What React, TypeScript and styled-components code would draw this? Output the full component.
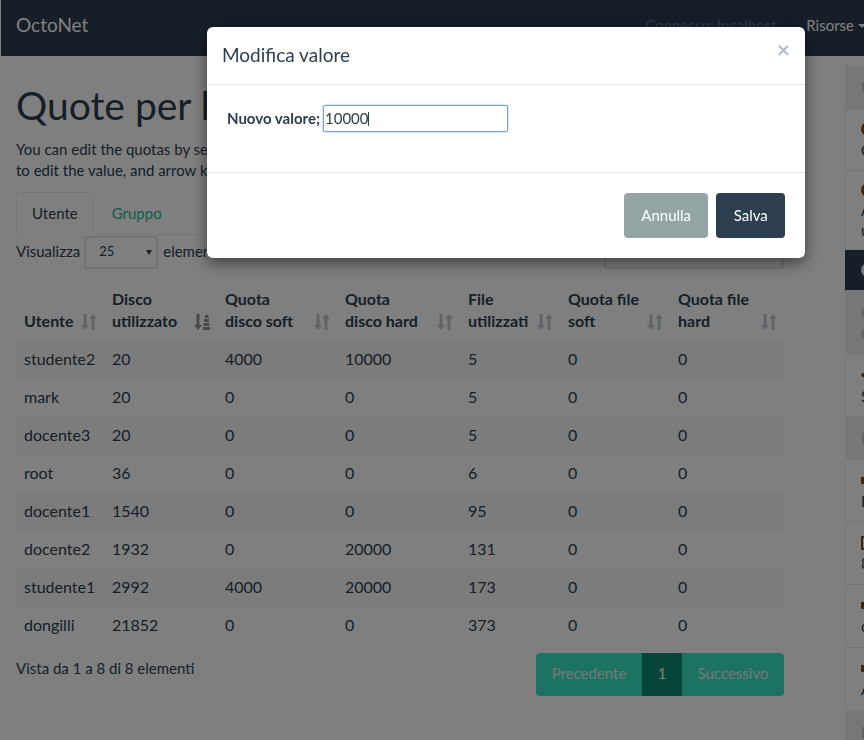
import React from 'react'
import styled, { createGlobalStyle } from 'styled-components'

const GlobalStyle = createGlobalStyle`
  html, body {
    margin: 0;
    height: 740px;
    overflow: hidden;
    background: #fff;
  }
  body {
    font-family: Lato, "Liberation Sans", sans-serif;
    font-size: 15px;
    line-height: 21.4px;
    color: #2c3e50;
  }
  * { box-sizing: border-box; }
`

const Page = styled.div`
  width: 900px;
  height: 740px;
  margin-left: 1px;
  overflow: hidden;
`

const Navbar = styled.nav`
  height: 56px;
  background: #2c3e50;
  display: flex;
  align-items: center;
  padding: 0 35px 6px 15px;
`

const Brand = styled.div`
  font-size: 19px;
  color: #fff;
`

const NavRight = styled.div`
  margin-left: auto;
  display: flex;
  align-items: center;
  gap: 30px;
  padding-top: 1px;
`

const NavText = styled.span`
  color: #5f7387;
`

const NavLink = styled.span`
  color: #fff;
  display: flex;
  align-items: center;
  gap: 4px;
  &::after {
    content: "";
    border-top: 4px solid #fff;
    border-left: 4px solid transparent;
    border-right: 4px solid transparent;
  }
`

const Layout = styled.div`
  display: grid;
  grid-template-columns: 768px 1fr;
  column-gap: 61px;
  padding-left: 15px;
`

const Content = styled.main`
  padding-top: 28px;
`

const Title = styled.h1`
  margin: 0;
  font-size: 39px;
  font-weight: 400;
  line-height: 43px;
  white-space: nowrap;
`

const Intro = styled.p`
  margin: 12px 0 10px;
`

const Tabs = styled.ul`
  list-style: none;
  display: flex;
  margin: 0;
  padding: 0;
  height: 43px;
  border-bottom: 1px solid #ecf0f1;
`

const Tab = styled.li<{ $active?: boolean }>`
  height: 43px;
  padding: 10px 15px;
  margin-right: 2px;
  border: 1px solid ${p => (p.$active ? '#ecf0f1' : 'transparent')};
  border-bottom-color: ${p => (p.$active ? '#fff' : 'transparent')};
  border-radius: 4px 4px 0 0;
  color: ${p => (p.$active ? '#2c3e50' : '#18bc9c')};
  background: ${p => (p.$active ? '#fff' : 'transparent')};
`

const Toolbar = styled.div`
  display: flex;
  justify-content: space-between;
  margin-top: 1px;
  height: 33px;
`

const LengthLabel = styled.label`
  display: flex;
  align-items: flex-start;
  gap: 5px;
  line-height: 31px;
`

const SelectWrap = styled.span`
  position: relative;
  display: block;
  margin-left: -1px;
  &::after {
    content: "";
    position: absolute;
    right: 6px;
    top: 14px;
    border-top: 5px solid #2c3e50;
    border-left: 3px solid transparent;
    border-right: 3px solid transparent;
  }
`

const LengthSelect = styled.select`
  display: block;
  appearance: none;
  width: 74px;
  height: 33px;
  padding: 0 0 2px 13px;
  border: 2px solid #dce4ec;
  border-radius: 3px;
  background: #fff;
  color: #2c3e50;
  font-family: inherit;
  font-size: 13px;
`

const SearchInput = styled.input`
  width: 180px;
  height: 33px;
  border: 2px solid #dce4ec;
  border-radius: 3px;
`

const Table = styled.table`
  width: 768px;
  margin-top: 12px;
  border-collapse: collapse;
  table-layout: fixed;
  font-size: 16px;
`

const HeadCell = styled.th<{ $w: number }>`
  position: relative;
  width: ${p => p.$w}px;
  padding: 7px 8px 9px;
  height: 60px;
  text-align: left;
  vertical-align: bottom;
  font-weight: 700;
  line-height: 22px;
`

const Row = styled.tr<{ $striped: boolean }>`
  background: ${p => (p.$striped ? '#f9f9f9' : 'transparent')};
`

const Cell = styled.td`
  height: 38px;
  padding: 0 8px 2px;
`

const SortMark = styled.svg<{ $active?: boolean }>`
  position: absolute;
  right: 7px;
  bottom: 11px;
  width: 16px;
  height: 16px;
  fill: #2c3e50;
  opacity: ${p => (p.$active ? 0.55 : 0.28)};
`

const TableFooter = styled.div`
  display: flex;
  justify-content: space-between;
  align-items: flex-start;
  margin-top: 8px;
`

const Info = styled.div`
  padding-top: 5px;
`

const Pager = styled.div`
  display: flex;
  height: 43px;
  border-radius: 4px;
  overflow: hidden;
`

const PageItem = styled.span<{ $current?: boolean; $w: number }>`
  width: ${p => p.$w}px;
  padding-top: 10px;
  text-align: center;
  background: ${p => (p.$current ? '#0f8974' : '#3be6c4')};
  color: ${p => (p.$current ? '#fff' : '#ecf0f1')};
`

const Side = styled.aside`
  margin-top: 10px;
  width: 100px;
`

const SideRow = styled.div<{ $h: number; $tone?: 'head' | 'dark' | 'soft' }>`
  height: ${p => p.$h}px;
  padding-left: 15px;
  display: flex;
  flex-direction: column;
  justify-content: center;
  white-space: nowrap;
  line-height: 20.5px;
  border-bottom: 1px solid #ecf0f1;
  border-left: 1px solid ${p => (p.$tone === 'dark' ? '#2c3e50' : '#ecf0f1')};
  background: ${p =>
    p.$tone === 'dark' ? '#2c3e50' : p.$tone === 'head' || p.$tone === 'soft' ? '#ecf0f1' : '#fff'};
  color: ${p => (p.$tone === 'head' ? '#b4bcc2' : p.$tone === 'soft' ? '#b4bcc2' : '#2c3e50')};
`

type GlyphKind = 'round' | 'bar' | 'dot' | 'light' | 'tall'

const glyphHeight: Record<GlyphKind, number> = { round: 14, light: 14, tall: 14, bar: 7, dot: 6 }

const SideGlyph = styled.span<{ $kind: GlyphKind }>`
  display: block;
  width: 14px;
  height: ${p => glyphHeight[p.$kind]}px;
  margin: ${p => (20.5 - glyphHeight[p.$kind]) / 2}px 0;
  border-radius: ${p => (p.$kind === 'bar' || p.$kind === 'tall' ? '1px' : '50%')};
  background: ${p => (p.$kind === 'light' ? '#dfeeff' : p.$kind === 'tall' ? 'transparent' : '#7a4a20')};
  border: ${p => (p.$kind === 'tall' ? '2px solid #7a4a20' : '0')};
`

const Backdrop = styled.div`
  position: fixed;
  inset: 0;
  background: rgba(0, 0, 0, 0.5);
`

const Dialog = styled.div`
  position: fixed;
  left: 207px;
  top: 27px;
  width: 598px;
  height: 231px;
  background: #fff;
  border-radius: 6px;
  box-shadow: 0 5px 15px rgba(0, 0, 0, 0.5);
`

const DialogHead = styled.div`
  display: flex;
  justify-content: space-between;
  align-items: flex-start;
  height: 58px;
  padding: 14px 15px;
  border-bottom: 1px solid #e5e5e5;
`

const DialogTitle = styled.h4`
  margin: 0;
  font-size: 19px;
  font-weight: 400;
  line-height: 27px;
`

const Close = styled.span`
  font-size: 23px;
  font-weight: 700;
  line-height: 16px;
  color: #b4bcc8;
`

const DialogBody = styled.div`
  height: 88px;
  padding: 20px;
  display: flex;
  align-items: flex-start;
  gap: 3px;
  border-bottom: 1px solid #e5e5e5;
`

const FieldLabel = styled.label`
  font-weight: 700;
  line-height: 26px;
`

const FieldWrap = styled.div`
  position: relative;
`

const FieldInput = styled.input`
  display: block;
  width: 185px;
  height: 27px;
  padding: 0 2px 1px 1px;
  border: 1px solid #7f9fcb;
  border-radius: 2px;
  box-shadow: 0 0 2px #7fa8e0;
  outline: none;
  font-family: inherit;
  font-size: 15px;
  color: #2c3e50;
`

const Caret = styled.span`
  position: absolute;
  left: 45px;
  top: 7px;
  width: 1px;
  height: 14px;
  background: #2c3e50;
`

const DialogFoot = styled.div`
  display: flex;
  justify-content: flex-end;
  gap: 8px;
  padding: 20px;
`

const Button = styled.button<{ $primary?: boolean }>`
  height: 45px;
  padding: 0 17.3px 2px;
  border: 0;
  border-radius: 4px;
  background: ${p => (p.$primary ? '#2c3e50' : '#95a5a6')};
  color: #fff;
  font-family: inherit;
  font-size: 15px;
`

const columns: [React.ReactNode, number][] = [
  ['Utente', 88],
  [<>Disco<br />utilizzato</>, 113],
  [<>Quota<br />disco soft</>, 120],
  [<>Quota<br />disco hard</>, 123],
  [<>File<br />utilizzati</>, 100],
  [<>Quota file<br />soft</>, 110],
  [<>Quota file<br />hard</>, 114],
]

const rows = [
  ['studente2', 20, 4000, 10000, 5, 0, 0],
  ['mark', 20, 0, 0, 5, 0, 0],
  ['docente3', 20, 0, 0, 5, 0, 0],
  ['root', 36, 0, 0, 6, 0, 0],
  ['docente1', 1540, 0, 0, 95, 0, 0],
  ['docente2', 1932, 0, 20000, 131, 0, 0],
  ['studente1', 2992, 4000, 20000, 173, 0, 0],
  ['dongilli', 21852, 0, 0, 373, 0, 0],
]

function SortIcon({ active }: { active?: boolean }) {
  return (
    <SortMark $active={active} viewBox="0 0 16 16">
      <path d="M2.500 0h3v11H8l-4 5-4-5h2.500z" />
      {active ? (
        <path d="M9 13h7v3H9zM9.500 9h6v3h-6zM10 5h5v3h-5zM11 1h3.500v3H11z" />
      ) : (
        <path d="M10.500 16h3V5H16l-4-5-4 5h2.500z" />
      )}
    </SortMark>
  )
}

function App() {
  return (
    <>
      <GlobalStyle />
      <Page>
        <Navbar>
          <Brand>OctoNet</Brand>
          <NavRight>
            <NavText>Connesso: localhost</NavText>
            <NavLink>Risorse</NavLink>
          </NavRight>
        </Navbar>
        <Layout>
          <Content>
            <Title>Quote per home</Title>
            <Intro>
              You can edit the quotas by selecting a cell and pressing enter
              <br />
              to edit the value, and arrow keys to move around the table.
            </Intro>
            <Tabs>
              <Tab $active>Utente</Tab>
              <Tab>Gruppo</Tab>
            </Tabs>
            <Toolbar>
              <LengthLabel>
                Visualizza
                <SelectWrap>
                  <LengthSelect defaultValue="25">
                    <option>10</option>
                    <option>25</option>
                    <option>50</option>
                  </LengthSelect>
                </SelectWrap>
                elementi
              </LengthLabel>
              <SearchInput />
            </Toolbar>
            <Table>
              <thead>
                <tr>
                  {columns.map(([label, w], i) => (
                    <HeadCell key={i} $w={w}>
                      {label}
                      <SortIcon active={i === 1} />
                    </HeadCell>
                  ))}
                </tr>
              </thead>
              <tbody>
                {rows.map((row, i) => (
                  <Row key={row[0]} $striped={i % 2 === 0}>
                    {row.map((v, j) => (
                      <Cell key={j}>{v}</Cell>
                    ))}
                  </Row>
                ))}
              </tbody>
            </Table>
            <TableFooter>
              <Info>Vista da 1 a 8 di 8 elementi</Info>
              <Pager>
                <PageItem $w={106}>Precedente</PageItem>
                <PageItem $w={40} $current>1</PageItem>
                <PageItem $w={102}>Successivo</PageItem>
              </Pager>
            </TableFooter>
          </Content>
          <Side>
            <SideRow $h={43} $tone="head">Utenti</SideRow>
            <SideRow $h={62}><SideGlyph $kind="round" />Online</SideRow>
            <SideRow $h={79}><SideGlyph $kind="round" />Admin<span>utente</span></SideRow>
            <SideRow $h={41} $tone="dark"><SideGlyph $kind="light" /></SideRow>
            <SideRow $h={64} $tone="soft">Quota<span>Gruppi</span></SideRow>
            <SideRow $h={62}><SideGlyph $kind="dot" />Samba</SideRow>
            <SideRow $h={43} $tone="head">Hardware</SideRow>
            <SideRow $h={62}><SideGlyph $kind="bar" />Dischi</SideRow>
            <SideRow $h={63}><SideGlyph $kind="tall" />8 GB</SideRow>
            <SideRow $h={63}><SideGlyph $kind="bar" />cpu</SideRow>
            <SideRow $h={63}><SideGlyph $kind="bar" />Altro</SideRow>
            <SideRow $h={43} $tone="head">Plugin</SideRow>
          </Side>
        </Layout>
      </Page>
      <Backdrop />
      <Dialog>
        <DialogHead>
          <DialogTitle>Modifica valore</DialogTitle>
          <Close>×</Close>
        </DialogHead>
        <DialogBody>
          <FieldLabel>Nuovo valore;</FieldLabel>
          <FieldWrap>
            <FieldInput defaultValue="10000" />
            <Caret />
          </FieldWrap>
        </DialogBody>
        <DialogFoot>
          <Button>Annulla</Button>
          <Button $primary>Salva</Button>
        </DialogFoot>
      </Dialog>
    </>
  )
}

export default App
